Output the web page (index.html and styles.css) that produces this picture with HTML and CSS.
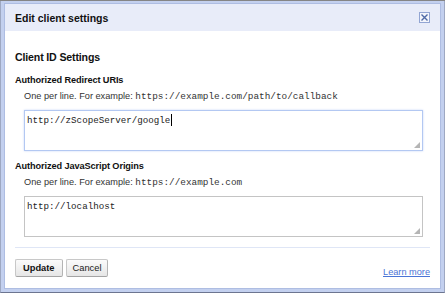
FILE: index.html
```html
<!DOCTYPE html>
<html>
<head>
    <title>Edit client settings</title>
    <meta charset="utf-8">
    <link rel="stylesheet" href="styles.css">
</head>

<body>
    <div class="frame">
        <div class="dialog">
            <div class="titlebar">
                <span class="title">Edit client settings</span>
                <span class="close">
                    <svg width="7" height="7" viewBox="0 0 7 7">
                        <path d="M0.5 0.5 L6.5 6.5 M6.5 0.5 L0.5 6.5" stroke="#4f6aa6" stroke-width="1.4" fill="none"/>
                    </svg>
                </span>
            </div>

            <div class="content">
                <h2>Client ID Settings</h2>

                <div class="field">
                    <label for="redirect-uris">Authorized Redirect URIs</label>
                    <div class="hint">One per line. For example: <code>https://example.com/path/to/callback</code></div>
                    <div class="box">
                        <textarea id="redirect-uris" class="focused">http://zScopeServer/google</textarea>
                        <span class="caret"></span>
                    </div>
                </div>

                <div class="field">
                    <label for="js-origins">Authorized JavaScript Origins</label>
                    <div class="hint">One per line. For example: <code>https://example.com</code></div>
                    <div class="box">
                        <textarea id="js-origins">http://localhost</textarea>
                    </div>
                </div>
            </div>

            <div class="footer">
                <button class="primary">Update</button>
                <button>Cancel</button>
                <a href="#" class="learn">Learn more</a>
            </div>
        </div>
    </div>
</body>

</html>
```

FILE: styles.css
```css
html, body {
    margin: 0;
    height: 100%;
}

body {
    font-family: 'Liberation Sans', Arial, sans-serif;
    font-size: 9.2px;
    color: #222;
    background-color: #858585;
}

.frame {
    box-sizing: border-box;
    margin-top: 1px;
    height: calc(100% - 1px);
    background-color: #c3d0ef;
    padding: 2px 3px 3px 3px;
    border-left: 1px solid #9ea8c2;
    border-right: 1px solid #9ea8c2;
    border-bottom: 1px solid #6c7590;
}

.dialog {
    box-sizing: border-box;
    height: 100%;
    background-color: #fff;
    border: 1px solid #aebde2;
}

.titlebar {
    display: flex;
    align-items: center;
    justify-content: space-between;
    height: 27px;
    padding: 0 10px 0 10px;
    background-color: #e8ecf9;
}

.title {
    font-weight: bold;
    font-size: 10.5px;
    color: #111;
}

.close {
    display: flex;
    align-items: center;
    justify-content: center;
    box-sizing: border-box;
    width: 11px;
    height: 11px;
    border: 1px solid #92a5d3;
    background-color: #f3f5fc;
}

.content {
    padding: 20px 10px 0 10px;
}

h2 {
    margin: 0 0 10px 0;
    font-size: 10.6px;
    line-height: 13px;
    letter-spacing: -0.15px;
    font-weight: bold;
    color: #111;
}

label {
    display: block;
    font-weight: bold;
    font-size: 9.2px;
    line-height: 12px;
    letter-spacing: -0.1px;
    color: #111;
    margin-bottom: 4px;
}

.hint {
    padding-left: 9px;
    line-height: 12px;
    margin-bottom: 7px;
    color: #333;
}

code {
    font-family: 'Liberation Mono', 'Courier New', monospace;
    font-size: 9.4px;
    color: #333;
}

.field {
    margin-bottom: 9px;
}

.field:last-child {
    margin-bottom: 10px;
}

.box {
    position: relative;
    width: 399px;
    margin-left: 9px;
}

.box::after {
    content: "";
    position: absolute;
    right: 3px;
    bottom: 3px;
    width: 6px;
    height: 6px;
    background:
        radial-gradient(circle, #b5b5b5 0.8px, transparent 1px) 0 0 / 2px 2px;
    clip-path: polygon(100% 0, 100% 100%, 0 100%);
}

textarea {
    display: block;
    box-sizing: border-box;
    width: 399px;
    height: 41px;
    padding: 4px 2px;
    font-family: 'Liberation Mono', 'Courier New', monospace;
    font-size: 9.2px;
    line-height: 11px;
    color: #222;
    border: 1px solid #c4c4c4;
    resize: none;
    outline: none;
}

textarea.focused {
    border: 1px solid #b3c8f2;
    box-shadow: 0 0 2px #c7d7f7;
}

.caret {
    position: absolute;
    left: 147px;
    top: 4px;
    width: 1px;
    height: 12px;
    background-color: #000;
}

.footer {
    display: flex;
    align-items: center;
    margin: 0 10px;
    padding-top: 11px;
    border-top: 1px solid #dfe6f6;
}

button {
    font-family: 'Liberation Sans', Arial, sans-serif;
    font-size: 9.3px;
    color: #222;
    height: 18px;
    padding: 0 6px;
    margin-right: 3px;
    border: 1px solid #c8c8c8;
    border-bottom-color: #a4a4a4;
    border-right-color: #b4b4b4;
    border-radius: 2px;
    background: linear-gradient(#fbfbfb, #e6e6e6);
}

button.primary {
    font-weight: bold;
    color: #111;
    padding: 0 7px;
}

.learn {
    margin-left: auto;
    margin-top: 7px;
    color: #4a74d6;
    font-size: 9.2px;
}
```
